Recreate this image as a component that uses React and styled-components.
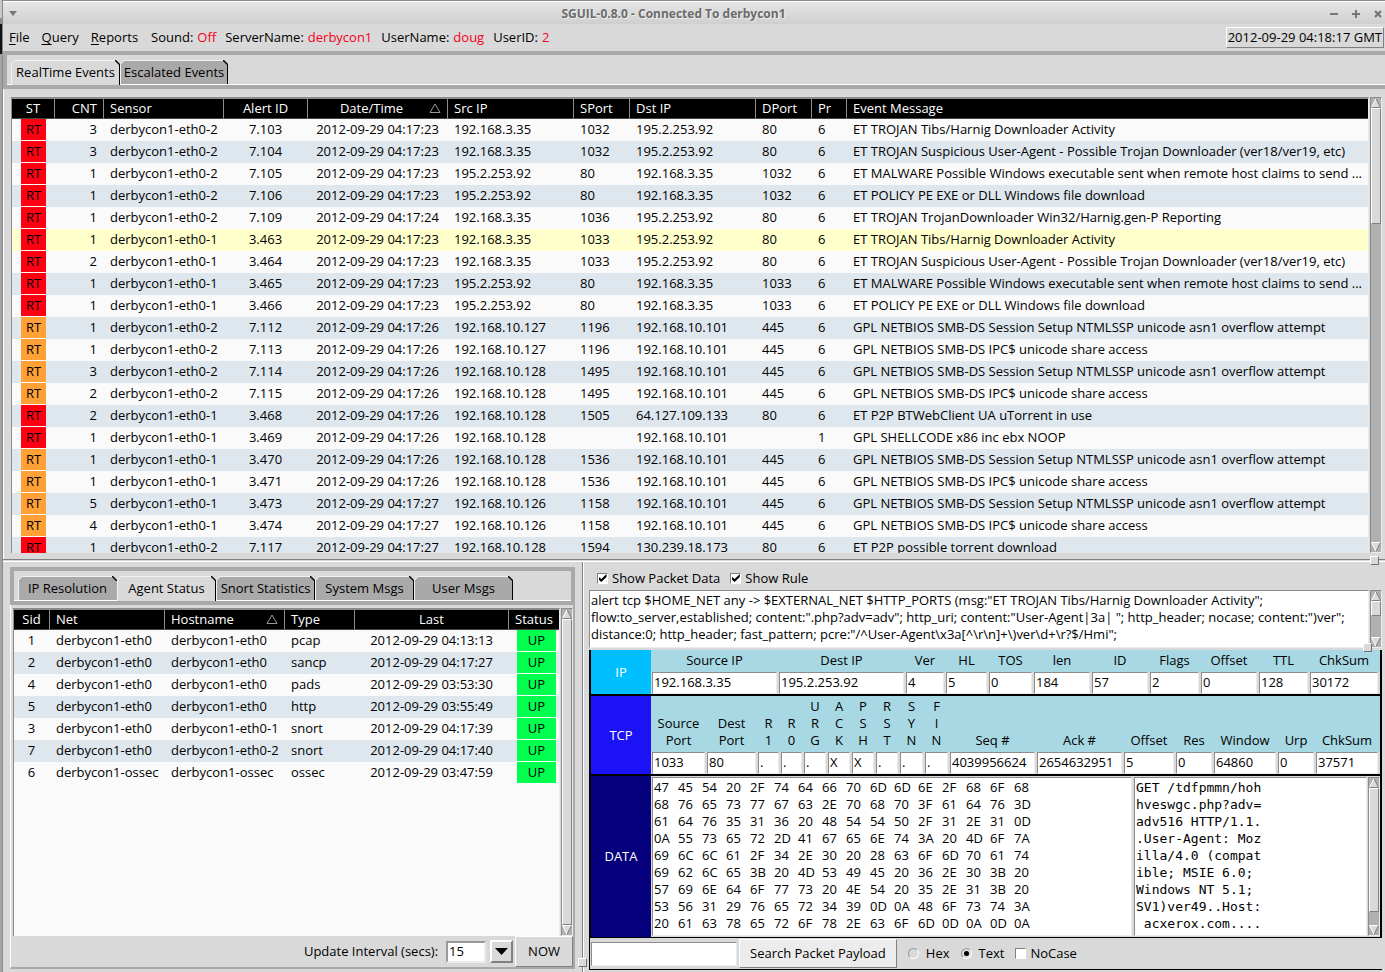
import React from "react"
import styled, { createGlobalStyle, css } from "styled-components"

const GlobalStyle = createGlobalStyle`
  * {
    box-sizing: border-box;
  }
  body {
    margin: 0;
    background: #d9d9d9;
  }
  body, button, input, select, textarea {
    font: 13px/17px "Open Sans", "Noto Sans", sans-serif;
    color: #000;
  }
  button, input, select, textarea {
    margin: 0;
    padding: 0;
    border-radius: 0;
    outline: none;
  }
`

const raised = css`
  border: 1px solid;
  border-color: #fff #808080 #808080 #fff;
`

const sunken = css`
  border: 1px solid;
  border-color: #8c8c8c #ececec #ececec #8c8c8c;
`

/* ---------- window ---------- */

const Desktop = styled.div`
  display: grid;
  grid-template-columns: 3px minmax(0, 1fr);
  grid-template-rows: minmax(0, 1fr);
  height: 100vh;
  overflow: hidden;
`

// edge of the window that lies behind
const Backdrop = styled.div`
  background: linear-gradient(#c8c8c8 18px, #8c8c8c 18px 24px, #111 24px 54px, #a3a3a3 54px);
  border-right: 1px solid #8a8a8a;
`

const Window = styled.div`
  display: grid;
  grid-template-rows: auto auto auto minmax(0, 1fr) 3px 410px;
  background: #d9d9d9;
`

const TitleBar = styled.header`
  display: flex;
  align-items: center;
  height: 24px;
  padding: 2px 2px 0 5px;
  border-top: 1px solid #8c8c8c;
  background: linear-gradient(#fff 1px, #e6e6e6 1px, #cfcfcf);
`

const Title = styled.h1`
  flex: 1;
  margin: 0;
  font: bold 12px/17px "Open Sans", "Noto Sans", sans-serif;
  color: #6b6b6b;
  text-align: center;
  text-shadow: 1px 1px 0 #eee;
`

const TitleButton = styled.button`
  display: grid;
  place-items: center;
  width: 10px;
  height: 14px;
  border: 0;
  background: none;
`

const TitleButtons = styled.div`
  display: flex;
  gap: 12px;
`

const MenuBar = styled.nav`
  display: flex;
  align-items: center;
  height: 27px;
  padding: 0 1px 0 6px;
`

const MenuItem = styled.button`
  border: 0;
  margin-right: 12px;
  background: none;
  &::first-letter {
    text-decoration: underline;
    text-underline-offset: 2px;
  }
`

const Info = styled.span`
  margin-left: ${(p) => (p.$first ? "1px" : "9px")};
  b {
    margin-left: 4px;
    font-weight: normal;
    color: #f5001d;
  }
`

const Clock = styled.time`
  margin-left: auto;
  padding: 1px;
  ${raised}
`

/* ---------- tabs ---------- */

const TabStrip = styled.div`
  display: flex;
  padding: 5px 4px 0;
  border: 4px solid #a9a9a9;
  border-right-width: ${(p) => (p.$open ? 0 : "4px")};
  box-shadow: inset 0 -1px #fff;
  height: 38px;
`

const TabButton = styled.button`
  position: relative;
  width: ${(p) => p.$width}px;
  border: 0;
  border-top: 1px solid #f2f2f2;
  border-left: 1px solid #f2f2f2;
  border-right: 1px solid ${(p) => (p.$covered ? "#a9a9a9" : "#000")};
  background: ${(p) => (p.$active ? "#d9d9d9" : "#a9a9a9")};
  height: ${(p) => (p.$active ? "25px" : "24px")};
  padding-bottom: ${(p) => (p.$active ? "1px" : 0)};
  white-space: nowrap;
`

const Corner = styled.svg`
  position: absolute;
  top: -1px;
  ${(p) => (p.$right ? "right: -1px;" : "left: -1px;")}
`

function Tab({ children, width, active, covered }) {
  return (
    <TabButton role="tab" aria-selected={!!active} $width={width} $active={active} $covered={covered}>
      <Corner width="5" height="5" aria-hidden="true">
        <path d="M0 0H5L0 5Z" fill="#d9d9d9" />
        <path d="M0 4.5L4.5 0" stroke="#f2f2f2" />
      </Corner>
      {children}
      <Corner $right width="5" height="5" aria-hidden="true">
        <path d="M0 0H5V5Z" fill="#d9d9d9" />
        <path d="M0 0L5 5" stroke="#000" strokeWidth="1.4" />
      </Corner>
    </TabButton>
  )
}

/* ---------- scroll bars ---------- */

const Track = styled.div`
  display: flex;
  flex-direction: column;
  flex: none;
  width: 12px;
  background: #b0b0b0;
  ${sunken}
`

const Thumb = styled.div`
  flex: ${(p) => (p.$size ? `0 0 ${p.$size}` : 1)};
  background: #d9d9d9;
  ${raised}
`

const Arrow = styled.svg`
  flex: none;
  display: block;
  ${(p) => p.$down && "margin-top: auto;"}
`

function ScrollBar({ size }) {
  return (
    <Track>
      <Arrow width="10" height="10" aria-hidden="true">
        <path d="M5 0.5L9.5 9.5H0.5Z" fill="#d9d9d9" />
        <path d="M0.5 9.5L5 0.5" stroke="#fff" />
        <path d="M5 0.5L9.5 9.5H0.5" stroke="#808080" fill="none" />
      </Arrow>
      <Thumb $size={size} />
      <Arrow $down width="10" height="10" aria-hidden="true">
        <path d="M5 9.5L9.5 0.5H0.5Z" fill="#d9d9d9" />
        <path d="M5 9.5L0.5 0.5H9.5" stroke="#fff" fill="none" />
        <path d="M9.5 0.5L5 9.5" stroke="#808080" />
      </Arrow>
    </Track>
  )
}

/* ---------- tables ---------- */

const TableFrame = styled.div`
  flex: 1;
  min-width: 0;
  overflow: hidden;
  border: 1px solid;
  border-width: 2px 1px 0 1px;
  border-color: #8c8c8c #ececec #ececec #8c8c8c;
  background: #fafafa;
`

const Table = styled.table`
  width: 100%;
  table-layout: fixed;
  border-spacing: 0;
`

const Th = styled.th`
  height: 20px;
  padding: 0 6px;
  border-right: 1px solid #8c8c8c;
  border-bottom: 1px solid #444;
  background: #000;
  color: #fff;
  font-weight: normal;
  text-align: ${(p) => p.$align || "left"};
  white-space: nowrap;
  &:last-child {
    border-right: 0;
  }
`

const HeadSort = styled.span`
  display: flex;
  align-items: center;
  span {
    flex: 1;
  }
`

const Row = styled.tr`
  background: #fafafa;
  &:nth-child(even) {
    background: #dfe7ee;
  }
  ${(p) => p.$selected && "&&& { background: #ffffcc; }"}
`

const Td = styled.td`
  height: 22px;
  padding: 0 7px 1px 6px;
  padding-right: ${(p) => (p.$align ? "7px" : 0)};
  overflow: hidden;
  text-align: ${(p) => p.$align || "left"};
  text-overflow: ellipsis;
  white-space: nowrap;
`

const Badge = styled.td`
  height: 22px;
  padding: 0;
  padding-left: ${(p) => p.$left}px;
  padding-right: ${(p) => p.$right}px;
  span {
    display: block;
    height: 21px;
    margin-bottom: 1px;
    line-height: 21px;
    box-shadow: 0 1px #fafafa;
    text-align: center;
    background: ${(p) => p.$color};
  }
`

function SortMark() {
  return (
    <svg width="12" height="11" aria-hidden="true">
      <path d="M6 1L11 9.5H1Z" fill="none" stroke="#999" />
    </svg>
  )
}

/* ---------- panes ---------- */

const EventsPane = styled.section`
  display: flex;
  gap: 1px;
  min-height: 0;
  padding: 8px 3px 6px 7px;
  border-left: 1px solid #fff;
`

const Sash = styled.div`
  position: relative;
  border-top: 1px solid #808080;
  border-bottom: 1px solid #fff;
`

const VerticalSash = styled.div`
  position: relative;
  border-left: 1px solid #808080;
  border-right: 1px solid #fff;
`

const Grip = styled.i`
  position: absolute;
  z-index: 1;
  width: 9px;
  height: 9px;
  border: 1px solid;
  border-color: #fff #707070 #707070 #fff;
  background: #d9d9d9;
  ${(p) => p.$place}
`

const Lower = styled.div`
  display: grid;
  grid-template-columns: minmax(0, 579fr) 2px minmax(0, 801fr);
`

const SensorPane = styled.section`
  display: flex;
  flex-direction: column;
  min-height: 0;
  padding: 5px 7px 3px;
`

const SensorBody = styled.div`
  display: flex;
  flex-direction: column;
  flex: 1;
  min-height: 0;
  padding: 3px 0 0 2px;
  border-left: 1px solid #fff;
  border-right: 2px solid #a9a9a9;
  border-bottom: 2px solid #a9a9a9;
`

const Scrolled = styled.div`
  display: flex;
  flex: ${(p) => (p.$grow ? 1 : "none")};
  gap: 1px;
  min-height: 0;
`

const SensorFooter = styled.div`
  display: flex;
  align-items: center;
  justify-content: flex-end;
  height: 31px;
  label {
    margin-right: 8px;
  }
`

const Interval = styled.select`
  width: 40px;
  height: 22px;
  padding-left: 1px;
  appearance: none;
  background: #fff;
  border: 2px solid;
  border-color: #999 #ececec #ececec #999;
`

const DropButton = styled.span`
  display: grid;
  place-items: center;
  width: 23px;
  height: 23px;
  margin: 0 2px 0 4px;
  border: 2px solid;
  border-color: #fff #808080 #808080 #fff;
`

const Button = styled.button`
  align-self: stretch;
  padding: 0 ${(p) => (p.$light ? "10px" : "12px")};
  background: ${(p) => (p.$light ? "#ececec" : "#d9d9d9")};
  white-space: nowrap;
  ${raised}
`

const PacketPane = styled.section`
  display: flex;
  flex-direction: column;
  min-width: 0;
  padding: 0 3px 2px 5px;
`

const Options = styled.div`
  display: flex;
  align-items: center;
  gap: 10px;
  height: 28px;
  padding: 4px 8px 0;
`

const CheckLabel = styled.label`
  display: flex;
  align-items: center;
  gap: 4px;
  white-space: nowrap;
`

const CheckBox = styled.input.attrs({ type: "checkbox" })`
  appearance: none;
  display: grid;
  place-items: center;
  width: 11px;
  height: 11px;
  background: #fff;
  border: 1px solid;
  border-color: #808080 #fff #fff #808080;
  &:checked::before {
    content: "";
    width: 8px;
    height: 8px;
    background: #000;
    clip-path: polygon(0 35%, 35% 62%, 100% 0, 100% 38%, 35% 100%, 0 70%);
  }
`

const RadioLabel = styled(CheckLabel)`
  gap: 7px;
`

const Radio = styled.input.attrs({ type: "radio" })`
  appearance: none;
  display: grid;
  place-items: center;
  width: 11px;
  height: 11px;
  border: 1px solid;
  border-color: #999 #fff #fff #999;
  border-radius: 50%;
  &:checked::before {
    content: "";
    width: 5px;
    height: 5px;
    border-radius: 50%;
    background: #000;
  }
`

const RuleRow = styled(Scrolled)`
  position: relative;
  height: 58px;
  margin-bottom: 2px;
`

const TextBox = styled.textarea`
  display: block;
  flex: 1;
  min-width: 0;
  padding: 1px;
  resize: none;
  overflow: hidden;
  background: #fff;
  font-family: ${(p) => (p.$mono ? '"DejaVu Sans Mono", monospace' : "inherit")};
  ${sunken}
`

const Packet = styled.div`
  display: flex;
  flex-direction: column;
  flex: 1;
  min-height: 0;
  border: solid #000;
  border-width: 0 2px 1px;
`

const Layer = styled.div`
  display: grid;
  grid-template-columns: 60px minmax(0, 1fr);
  flex: ${(p) => (p.$grow ? 1 : "none")};
  min-height: 0;
  & + & {
    border-top: 2px solid #000;
  }
`

const LayerName = styled.div`
  display: grid;
  place-items: center;
  background: ${(p) => p.$color};
  color: #fff;
`

const Fields = styled.div`
  display: grid;
  grid-template-columns: ${(p) => p.$columns};
  padding-left: 1px;
  background: linear-gradient(to top, #d9d9d9 22px, #a8d8e3 22px);
`

const Field = styled.label`
  display: flex;
  flex-direction: column;
  justify-content: flex-end;
  min-width: 0;
  span {
    padding: 2px 2px 3px 0;
    text-align: center;
    white-space: pre;
  }
  input {
    width: calc(100% - 2px);
    height: 22px;
    padding: 0 0 2px 1px;
    background: #fff;
    ${sunken}
  }
`

const Payload = styled.div`
  display: flex;
  gap: 2px;
  min-width: 0;
  padding: 1px 0 1px 1px;
`

const HexDump = styled.div`
  flex: 478;
  min-width: 0;
  padding: 1px;
  overflow: hidden;
  background: #fff;
  ${sunken}
`

const HexLine = styled.div`
  display: grid;
  grid-template-columns: repeat(16, 24px);
`

const PayloadText = styled(Scrolled)`
  flex: 247;
  min-width: 0;
`

const SearchBar = styled.div`
  display: flex;
  align-items: center;
  height: 32px;
  padding: 1px 0 1px 1px;
  border-left: 1px solid #000;
  border-bottom: 1px solid #000;
`

const SearchInput = styled.input`
  width: 146px;
  height: 24px;
  margin-right: 2px;
  padding: 0 2px;
  ${sunken}
`

const SearchOptions = styled.div`
  display: flex;
  gap: 11px;
  padding-left: 11px;
`

/* ---------- data ---------- */

const RED = "#ff0013"
const ORANGE = "#ffa136"

const TIBS = "ET TROJAN Tibs/Harnig Downloader Activity"
const SUSPICIOUS = "ET TROJAN Suspicious User-Agent - Possible Trojan Downloader (ver18/ver19, etc)"
const MALWARE = "ET MALWARE Possible Windows executable sent when remote host claims to send ..."
const POLICY = "ET POLICY PE EXE or DLL Windows file download"
const SETUP = "GPL NETBIOS SMB-DS Session Setup NTMLSSP unicode asn1 overflow attempt"
const IPC = "GPL NETBIOS SMB-DS IPC$ unicode share access"

const events = [
  [RED, 3, "derbycon1-eth0-2", "7.103", "04:17:23", "192.168.3.35", "1032", "195.2.253.92", "80", 6, TIBS],
  [RED, 3, "derbycon1-eth0-2", "7.104", "04:17:23", "192.168.3.35", "1032", "195.2.253.92", "80", 6, SUSPICIOUS],
  [RED, 1, "derbycon1-eth0-2", "7.105", "04:17:23", "195.2.253.92", "80", "192.168.3.35", "1032", 6, MALWARE],
  [RED, 1, "derbycon1-eth0-2", "7.106", "04:17:23", "195.2.253.92", "80", "192.168.3.35", "1032", 6, POLICY],
  [RED, 1, "derbycon1-eth0-2", "7.109", "04:17:24", "192.168.3.35", "1036", "195.2.253.92", "80", 6, "ET TROJAN TrojanDownloader Win32/Harnig.gen-P Reporting"],
  [RED, 1, "derbycon1-eth0-1", "3.463", "04:17:23", "192.168.3.35", "1033", "195.2.253.92", "80", 6, TIBS],
  [RED, 2, "derbycon1-eth0-1", "3.464", "04:17:23", "192.168.3.35", "1033", "195.2.253.92", "80", 6, SUSPICIOUS],
  [RED, 1, "derbycon1-eth0-1", "3.465", "04:17:23", "195.2.253.92", "80", "192.168.3.35", "1033", 6, MALWARE],
  [RED, 1, "derbycon1-eth0-1", "3.466", "04:17:23", "195.2.253.92", "80", "192.168.3.35", "1033", 6, POLICY],
  [ORANGE, 1, "derbycon1-eth0-2", "7.112", "04:17:26", "192.168.10.127", "1196", "192.168.10.101", "445", 6, SETUP],
  [ORANGE, 1, "derbycon1-eth0-2", "7.113", "04:17:26", "192.168.10.127", "1196", "192.168.10.101", "445", 6, IPC],
  [ORANGE, 3, "derbycon1-eth0-2", "7.114", "04:17:26", "192.168.10.128", "1495", "192.168.10.101", "445", 6, SETUP],
  [ORANGE, 2, "derbycon1-eth0-2", "7.115", "04:17:26", "192.168.10.128", "1495", "192.168.10.101", "445", 6, IPC],
  [RED, 2, "derbycon1-eth0-1", "3.468", "04:17:26", "192.168.10.128", "1505", "64.127.109.133", "80", 6, "ET P2P BTWebClient UA uTorrent in use"],
  [RED, 1, "derbycon1-eth0-1", "3.469", "04:17:26", "192.168.10.128", "", "192.168.10.101", "", 1, "GPL SHELLCODE x86 inc ebx NOOP"],
  [ORANGE, 1, "derbycon1-eth0-1", "3.470", "04:17:26", "192.168.10.128", "1536", "192.168.10.101", "445", 6, SETUP],
  [ORANGE, 1, "derbycon1-eth0-1", "3.471", "04:17:26", "192.168.10.128", "1536", "192.168.10.101", "445", 6, IPC],
  [ORANGE, 5, "derbycon1-eth0-1", "3.473", "04:17:27", "192.168.10.126", "1158", "192.168.10.101", "445", 6, SETUP],
  [ORANGE, 4, "derbycon1-eth0-1", "3.474", "04:17:27", "192.168.10.126", "1158", "192.168.10.101", "445", 6, IPC],
  [RED, 1, "derbycon1-eth0-2", "7.117", "04:17:27", "192.168.10.128", "1594", "130.239.18.173", "80", 6, "ET P2P possible torrent download"],
]

const agents = [
  [1, "derbycon1-eth0", "derbycon1-eth0", "pcap", "04:13:13"],
  [2, "derbycon1-eth0", "derbycon1-eth0", "sancp", "04:17:27"],
  [4, "derbycon1-eth0", "derbycon1-eth0", "pads", "03:53:30"],
  [5, "derbycon1-eth0", "derbycon1-eth0", "http", "03:55:49"],
  [3, "derbycon1-eth0", "derbycon1-eth0-1", "snort", "04:17:39"],
  [7, "derbycon1-eth0", "derbycon1-eth0-2", "snort", "04:17:40"],
  [6, "derbycon1-ossec", "derbycon1-ossec", "ossec", "03:47:59"],
]

// [caption, value, share of the width]
const ipFields = [
  ["Source IP", "192.168.3.35", 127],
  ["Dest IP", "195.2.253.92", 127],
  ["Ver", "4", 40],
  ["HL", "5", 43],
  ["TOS", "0", 45],
  ["len", "184", 58],
  ["ID", "57", 58],
  ["Flags", "2", 51],
  ["Offset", "0", 58],
  ["TTL", "128", 51],
  ["ChkSum", "30172", 70],
]

const tcpFields = [
  ["Source\nPort", "1033", 55],
  ["Dest\nPort", "80", 51],
  ["R\n1", ".", 23],
  ["R\n0", ".", 23],
  ["U\nR\nG", ".", 24],
  ["A\nC\nK", "X", 24],
  ["P\nS\nH", "X", 24],
  ["R\nS\nT", ".", 24],
  ["S\nY\nN", ".", 25],
  ["F\nI\nN", ".", 25],
  ["Seq #", "4039956624", 87],
  ["Ack #", "2654632951", 87],
  ["Offset", "5", 52],
  ["Res", "0", 38],
  ["Window", "64860", 64],
  ["Urp", "0", 38],
  ["ChkSum", "37571", 64],
]

const hex = [
  "47 45 54 20 2F 74 64 66 70 6D 6D 6E 2F 68 6F 68",
  "68 76 65 73 77 67 63 2E 70 68 70 3F 61 64 76 3D",
  "61 64 76 35 31 36 20 48 54 54 50 2F 31 2E 31 0D",
  "0A 55 73 65 72 2D 41 67 65 6E 74 3A 20 4D 6F 7A",
  "69 6C 6C 61 2F 34 2E 30 20 28 63 6F 6D 70 61 74",
  "69 62 6C 65 3B 20 4D 53 49 45 20 36 2E 30 3B 20",
  "57 69 6E 64 6F 77 73 20 4E 54 20 35 2E 31 3B 20",
  "53 56 31 29 76 65 72 34 39 0D 0A 48 6F 73 74 3A",
  "20 61 63 78 65 72 6F 78 2E 63 6F 6D 0D 0A 0D 0A",
]

const ascii = [
  "GET /tdfpmmn/hoh",
  "hveswgc.php?adv=",
  "adv516 HTTP/1.1.",
  ".User-Agent: Moz",
  "illa/4.0 (compat",
  "ible; MSIE 6.0; ",
  "Windows NT 5.1; ",
  "SV1)ver49..Host:",
  " acxerox.com....",
].join("\n")

const rule = [
  'alert tcp $HOME_NET any -> $EXTERNAL_NET $HTTP_PORTS (msg:"ET TROJAN Tibs/Harnig Downloader Activity";',
  'flow:to_server,established; content:".php?adv=adv"; http_uri; content:"User-Agent|3a| "; http_header; nocase; content:")ver";',
  'distance:0; http_header; fast_pattern; pcre:"/^User-Agent\\x3a[^\\r\\n]+\\)ver\\d+\\r?$/Hmi";',
].join("\n")

/* ---------- components ---------- */

function Columns({ widths }) {
  return (
    <colgroup>
      {widths.map((w, i) => (
        <col key={i} width={w} />
      ))}
    </colgroup>
  )
}

function EventTable() {
  return (
    <Table>
      <Columns widths={[43, 49, 120, 84, 140, 126, 56, 126, 56, 35, undefined]} />
      <thead>
        <tr>
          <Th $align="center">ST</Th>
          <Th $align="right">CNT</Th>
          <Th>Sensor</Th>
          <Th $align="center">Alert ID</Th>
          <Th $align="center">
            <HeadSort>
              <span>Date/Time</span>
              <SortMark />
            </HeadSort>
          </Th>
          <Th>Src IP</Th>
          <Th>SPort</Th>
          <Th>Dst IP</Th>
          <Th>DPort</Th>
          <Th>Pr</Th>
          <Th>Event Message</Th>
        </tr>
      </thead>
      <tbody>
        {events.map(([color, count, sensor, id, time, src, sport, dst, dport, proto, message]) => (
          <Row key={id} $selected={id === "3.463"}>
            <Badge $color={color} $left={9} $right={9}>
              <span>RT</span>
            </Badge>
            <Td $align="right">{count}</Td>
            <Td>{sensor}</Td>
            <Td $align="center">{id}</Td>
            <Td $align="center">2012-09-29 {time}</Td>
            <Td>{src}</Td>
            <Td>{sport}</Td>
            <Td>{dst}</Td>
            <Td>{dport}</Td>
            <Td>{proto}</Td>
            <Td>{message}</Td>
          </Row>
        ))}
      </tbody>
    </Table>
  )
}

function AgentTable() {
  return (
    <Table>
      <Columns widths={[36, 115, 120, 70, 154, undefined]} />
      <thead>
        <tr>
          <Th $align="center">Sid</Th>
          <Th>Net</Th>
          <Th>
            <HeadSort>
              <span>Hostname</span>
              <SortMark />
            </HeadSort>
          </Th>
          <Th>Type</Th>
          <Th $align="center">Last</Th>
          <Th $align="center">Status</Th>
        </tr>
      </thead>
      <tbody>
        {agents.map(([sid, net, host, type, time]) => (
          <Row key={sid}>
            <Td $align="center">{sid}</Td>
            <Td>{net}</Td>
            <Td>{host}</Td>
            <Td>{type}</Td>
            <Td $align="center">2012-09-29 {time}</Td>
            <Badge $color="#00ff4e" $left={8} $right={3}>
              <span>UP</span>
            </Badge>
          </Row>
        ))}
      </tbody>
    </Table>
  )
}

function FieldRow({ fields }) {
  return (
    <Fields $columns={fields.map((f) => `minmax(0, ${f[2]}fr)`).join(" ")}>
      {fields.map(([caption, value]) => (
        <Field key={caption}>
          <span>{caption}</span>
          <input type="text" readOnly value={value} />
        </Field>
      ))}
    </Fields>
  )
}

export default function App() {
  return (
    <Desktop>
      <GlobalStyle />
      <Backdrop />
      <Window>
        <TitleBar>
          <TitleButton aria-label="Window menu">
            <svg width="8" height="5">
              <path d="M0 0H8L4 5Z" fill="#777" />
            </svg>
          </TitleButton>
          <Title>SGUIL-0.8.0 - Connected To derbycon1</Title>
          <TitleButtons>
            <TitleButton aria-label="Minimize">
              <svg width="8" height="8">
                <path d="M0 4H8" stroke="#777" strokeWidth="2" />
              </svg>
            </TitleButton>
            <TitleButton aria-label="Maximize">
              <svg width="8" height="8">
                <path d="M0 4H8M4 0V8" stroke="#777" strokeWidth="2" />
              </svg>
            </TitleButton>
            <TitleButton aria-label="Close">
              <svg width="8" height="8">
                <path d="M1 1L7 7M7 1L1 7" stroke="#777" strokeWidth="2.4" />
              </svg>
            </TitleButton>
          </TitleButtons>
        </TitleBar>

        <MenuBar>
          <MenuItem>File</MenuItem>
          <MenuItem>Query</MenuItem>
          <MenuItem>Reports</MenuItem>
          <Info $first>
            Sound:<b>Off</b>
          </Info>
          <Info>
            ServerName:<b>derbycon1</b>
          </Info>
          <Info>
            UserName:<b>doug</b>
          </Info>
          <Info>
            UserID:<b>2</b>
          </Info>
          <Clock>2012-09-29 04:18:17 GMT</Clock>
        </MenuBar>

        <TabStrip role="tablist" $open>
          <Tab width={109} active>RealTime Events</Tab>
          <Tab width={108}>Escalated Events</Tab>
        </TabStrip>

        <EventsPane>
          <TableFrame>
            <EventTable />
          </TableFrame>
          <ScrollBar size="116px" />
        </EventsPane>

        <Sash>
          <Grip $place="right: 6px; top: -4px;" />
        </Sash>

        <Lower>
          <SensorPane>
            <TabStrip role="tablist">
              <Tab width={99} covered>IP Resolution</Tab>
              <Tab width={99} active>Agent Status</Tab>
              <Tab width={99}>Snort Statistics</Tab>
              <Tab width={99}>System Msgs</Tab>
              <Tab width={99}>User Msgs</Tab>
            </TabStrip>
            <SensorBody>
              <Scrolled $grow>
                <TableFrame>
                  <AgentTable />
                </TableFrame>
                <ScrollBar />
              </Scrolled>
              <SensorFooter>
                <label htmlFor="interval">Update Interval (secs):</label>
                <Interval id="interval" defaultValue="15">
                  <option>15</option>
                  <option>30</option>
                  <option>60</option>
                </Interval>
                <DropButton>
                  <svg width="13" height="7" aria-hidden="true">
                    <path d="M0 0H13L6.5 7Z" />
                  </svg>
                </DropButton>
                <Button>NOW</Button>
              </SensorFooter>
            </SensorBody>
          </SensorPane>

          <VerticalSash>
            <Grip $place="left: -5px; bottom: 5px;" />
          </VerticalSash>

          <PacketPane>
            <Options>
              <CheckLabel>
                <CheckBox defaultChecked />
                Show Packet Data
              </CheckLabel>
              <CheckLabel>
                <CheckBox defaultChecked />
                Show Rule
              </CheckLabel>
            </Options>
            <RuleRow>
              <TextBox aria-label="Rule" readOnly value={rule} />
              <ScrollBar size="15px" />
              <Grip $place="right: 10px; bottom: -4px;" />
            </RuleRow>
            <Packet>
              <Layer>
                <LayerName $color="#00bfff">IP</LayerName>
                <FieldRow fields={ipFields} />
              </Layer>
              <Layer>
                <LayerName $color="#1b12f5">TCP</LayerName>
                <FieldRow fields={tcpFields} />
              </Layer>
              <Layer $grow>
                <LayerName $color="#05007b">DATA</LayerName>
                <Payload>
                  <HexDump>
                    {hex.map((line, i) => (
                      <HexLine key={i}>
                        {line.split(" ").map((byte, j) => (
                          <span key={j}>{byte}</span>
                        ))}
                      </HexLine>
                    ))}
                  </HexDump>
                  <PayloadText>
                    <TextBox $mono aria-label="Payload text" readOnly value={ascii} />
                    <ScrollBar size="124px" />
                  </PayloadText>
                </Payload>
              </Layer>
            </Packet>
            <SearchBar>
              <SearchInput type="text" aria-label="Search text" />
              <Button $light>Search Packet Payload</Button>
              <SearchOptions>
                <RadioLabel>
                  <Radio name="mode" />
                  Hex
                </RadioLabel>
                <RadioLabel>
                  <Radio name="mode" defaultChecked />
                  Text
                </RadioLabel>
                <CheckLabel>
                  <CheckBox />
                  NoCase
                </CheckLabel>
              </SearchOptions>
            </SearchBar>
          </PacketPane>
        </Lower>
      </Window>
    </Desktop>
  )
}
